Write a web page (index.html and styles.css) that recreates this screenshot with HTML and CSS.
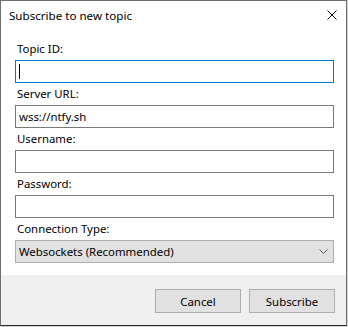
FILE: index.html
```html
<!DOCTYPE html>
<html lang="en">
<head>
<meta charset="UTF-8" />
<title>Subscribe to new topic</title>
<link rel="stylesheet" href="styles.css">
</head>
<body>

<!-- ───── DIALOG WINDOW ───── -->
<div class="window">
  <div class="titlebar">
    <span class="title">Subscribe to new topic</span>
    <svg class="close" width="10" height="10" viewBox="0 0 10 10">
      <path d="M0.5 0.5L9.5 9.5M9.5 0.5L0.5 9.5" stroke="#111" stroke-width="1" fill="none"/>
    </svg>
  </div>

  <!-- form fields -->
  <div class="content">
    <div class="field">
      <label>Topic ID:</label>
      <div class="input focus"><span class="caret"></span></div>
    </div>
    <div class="field">
      <label>Server URL:</label>
      <div class="input">wss://ntfy.sh</div>
    </div>
    <div class="field">
      <label>Username:</label>
      <div class="input"></div>
    </div>
    <div class="field">
      <label>Password:</label>
      <div class="input"></div>
    </div>
    <div class="field">
      <label>Connection Type:</label>
      <div class="combo">
        <span>Websockets (Recommended)</span>
        <svg width="9" height="5" viewBox="0 0 9 5">
          <path d="M0.5 0.5L4.5 4.5L8.5 0.5" stroke="#555" stroke-width="1" fill="none"/>
        </svg>
      </div>
    </div>
  </div>

  <!-- button bar -->
  <div class="footer">
    <button class="btn">Cancel</button>
    <button class="btn">Subscribe</button>
  </div>
</div>

</body>
</html>
```

FILE: styles.css
```css
/* ───── RESET ───── */
*{margin:0;padding:0;box-sizing:border-box}

body{
  width:348px;height:327px;background:#cfcfcf;
  font-family:"Noto Sans","Open Sans",sans-serif;font-size:11.4px;color:#000;
}

/* ───── WINDOW ───── */
.window{
  width:347px;height:326px;display:flex;flex-direction:column;
  background:#fff;border:1px solid #6e6e6e;border-bottom-color:#2b2b2b;
}
.titlebar{
  height:29px;display:flex;align-items:center;justify-content:space-between;
  padding:0 9px 0 8px;
}
.title{font-size:11.6px;line-height:16px}
.close{display:block;margin-top:-1px}

/* form */
.content{flex:1;padding:11px 12px 0 14px}
.field{display:flex;flex-direction:column;margin-bottom:3px}
.field label{line-height:16px;height:16px;margin:0 0 3px 2px}
.input{
  height:23px;border:1px solid #7a7a7a;background:#fff;
  padding:0 3px;line-height:21px;display:flex;align-items:center
}
.input.focus{border-color:#0078d7}
.caret{display:block;width:1px;height:15px;background:#000}

.combo{
  height:23px;border:1px solid #adadad;background:#e1e1e1;
  display:flex;align-items:center;justify-content:space-between;padding:0 5px 0 3px
}

/* button bar */
.footer{
  height:50px;background:#f0f0f0;display:flex;justify-content:flex-end;gap:8px;
  padding:14px 11px 0 0
}
.btn{
  width:86px;height:24px;background:#e1e1e1;border:1px solid #adadad;
  font-family:inherit;font-size:11.4px;color:#000
}
```
